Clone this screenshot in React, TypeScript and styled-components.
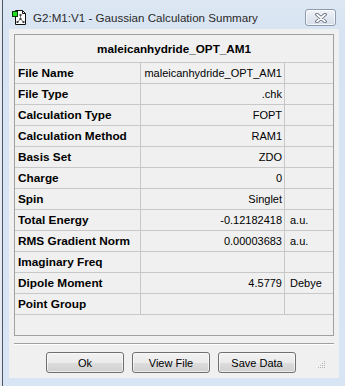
import { Fragment } from "react";
import styled, { createGlobalStyle } from "styled-components";

const GlobalStyle = createGlobalStyle`
  html, body {
    margin: 0;
    padding: 0;
    background: #e6ebf1;
  }
  body {
    font-family: "Liberation Sans", Arial, sans-serif;
  }
`;

const Frame = styled.div`
  display: flex;
  flex-direction: column;
  width: 343px;
  height: 386px;
  margin-left: 2px;
  box-sizing: border-box;
  border-left: 1px solid #4b5564;
  background: linear-gradient(#dde7f3, #d6e3f2 40px, #d8e5f4);
`;

const TitleBar = styled.div`
  display: flex;
  align-items: center;
  height: 29px;
  padding: 6px 9px 0 9px;
  box-sizing: border-box;
`;

const TitleText = styled.span`
  flex: 1;
  margin-left: 5px;
  font-size: 11.6px;
  color: #2a2a2a;
  white-space: nowrap;
`;

const CloseButton = styled.div`
  display: flex;
  align-items: center;
  justify-content: center;
  width: 31px;
  height: 17px;
  box-sizing: border-box;
  border: 1px solid #8d9bb0;
  border-radius: 3px;
  background: linear-gradient(#f1f4f8, #e2e8f0 50%, #d6dee9);
  box-shadow: inset 0 0 0 1px rgba(255, 255, 255, 0.7);
`;

const Client = styled.div`
  display: flex;
  flex-direction: column;
  height: 349px;
  margin: 0 6px;
  padding: 5px;
  box-sizing: border-box;
  background: #f0f0f0;
`;

const Table = styled.div`
  display: grid;
  grid-template-columns: 126px 144px 48px;
  grid-template-rows: 28px repeat(12, 21px) 20px;
  height: 302px;
  box-sizing: border-box;
  border: 1px solid #a0a0a0;
  background: #f0f0f0;
`;

const Header = styled.div`
  grid-column: 1 / 4;
  display: flex;
  align-items: center;
  justify-content: center;
  border-bottom: 1px solid #c8c8c8;
  font-size: 11.7px;
  font-weight: bold;
  color: #000;
`;

const Cell = styled.div<{ $kind: "label" | "value" | "unit" }>`
  display: flex;
  align-items: center;
  justify-content: ${(p) => (p.$kind === "value" ? "flex-end" : "flex-start")};
  padding: ${(p) =>
    p.$kind === "label" ? "0 0 0 3px" : p.$kind === "value" ? "0 2px 0 0" : "0 0 0 5px"};
  border-bottom: 1px solid #c8c8c8;
  border-right: ${(p) => (p.$kind === "unit" ? "none" : "1px solid #c8c8c8")};
  box-sizing: border-box;
  overflow: hidden;
  white-space: nowrap;
  color: #000;
  font-size: ${(p) => (p.$kind === "label" ? "11.8px" : "11px")};
  font-weight: ${(p) => (p.$kind === "label" ? "bold" : "normal")};
`;

const Separator = styled.div`
  height: 1px;
  margin-top: 7px;
  background: #a0a0a0;
  border-bottom: 1px solid #ffffff;
`;

const ButtonRow = styled.div`
  display: flex;
  gap: 8px;
  margin-top: 7px;
  padding-left: 32px;
`;

const Button = styled.div`
  display: flex;
  align-items: center;
  justify-content: center;
  width: 78px;
  height: 21px;
  box-sizing: border-box;
  border: 1px solid #707070;
  border-radius: 3px;
  background: linear-gradient(#f2f2f2, #ebebeb 50%, #dddddd 51%, #cfcfcf);
  box-shadow: inset 0 0 0 1px rgba(255, 255, 255, 0.6);
  font-size: 11px;
  color: #000;
`;

const Grip = styled.svg`
  margin-left: auto;
  margin-right: 8px;
  align-self: flex-end;
  margin-bottom: 4px;
`;

const rows: [string, string, string][] = [
  ["File Name", "maleicanhydride_OPT_AM1", ""],
  ["File Type", ".chk", ""],
  ["Calculation Type", "FOPT", ""],
  ["Calculation Method", "RAM1", ""],
  ["Basis Set", "ZDO", ""],
  ["Charge", "0", ""],
  ["Spin", "Singlet", ""],
  ["Total Energy", "-0.12182418", "a.u."],
  ["RMS Gradient Norm", "0.00003683", "a.u."],
  ["Imaginary Freq", "", ""],
  ["Dipole Moment", "4.5779", "Debye"],
  ["Point Group", "", ""],
];

function AppIcon() {
  return (
    <svg width="16" height="17" viewBox="0 0 16 17">
      <path d="M3.5 1.5h7l3 3v11h-10z" fill="#fff" stroke="#111" />
      <path d="M10.5 1.5v3h3" fill="none" stroke="#111" />
      <g stroke="#777" strokeWidth="1">
        <line x1="8.5" y1="6" x2="8.5" y2="10" />
        <line x1="8.5" y1="10" x2="5.5" y2="13" />
        <line x1="8.5" y1="10" x2="11.5" y2="13" />
      </g>
      <rect x="7.5" y="5" width="2" height="2" fill="#444" />
      <rect x="7.5" y="9" width="2" height="2" fill="#444" />
      <rect x="4.5" y="12" width="2" height="2" fill="#444" />
      <rect x="10.5" y="12" width="2" height="2" fill="#444" />
      <rect x="0.5" y="2.5" width="5" height="5" fill="#22dd22" stroke="#0a3a0a" />
    </svg>
  );
}

function CloseGlyph() {
  return (
    <svg width="14" height="10" viewBox="0 0 14 10">
      <path d="M3 1.5l8 7M11 1.5l-8 7" stroke="#5d6677" strokeWidth="3.6" strokeLinecap="round" />
      <path d="M3 1.5l8 7M11 1.5l-8 7" stroke="#ffffff" strokeWidth="1.8" strokeLinecap="round" />
    </svg>
  );
}

function App() {
  return (
    <>
      <GlobalStyle />
      <Frame>
        <TitleBar>
          <AppIcon />
          <TitleText>G2:M1:V1 - Gaussian Calculation Summary</TitleText>
          <CloseButton>
            <CloseGlyph />
          </CloseButton>
        </TitleBar>
        <Client>
          <Table>
            <Header>maleicanhydride_OPT_AM1</Header>
            {rows.map(([label, value, unit]) => (
              <Fragment key={label}>
                <Cell $kind="label">{label}</Cell>
                <Cell $kind="value">{value}</Cell>
                <Cell $kind="unit">{unit}</Cell>
              </Fragment>
            ))}
          </Table>
          <Separator />
          <ButtonRow>
            <Button>Ok</Button>
            <Button>View File</Button>
            <Button>Save Data</Button>
            <Grip width="8" height="8" viewBox="0 0 8 8">
              <g fill="#b4b4b4">
                <rect x="6" y="0" width="1" height="1" />
                <rect x="4" y="2" width="1" height="1" />
                <rect x="6" y="2" width="1" height="1" />
                <rect x="2" y="4" width="1" height="1" />
                <rect x="4" y="4" width="1" height="1" />
                <rect x="6" y="4" width="1" height="1" />
                <rect x="0" y="6" width="1" height="1" />
                <rect x="2" y="6" width="1" height="1" />
                <rect x="4" y="6" width="1" height="1" />
                <rect x="6" y="6" width="1" height="1" />
              </g>
            </Grip>
          </ButtonRow>
        </Client>
      </Frame>
    </>
  );
}

export default App;
